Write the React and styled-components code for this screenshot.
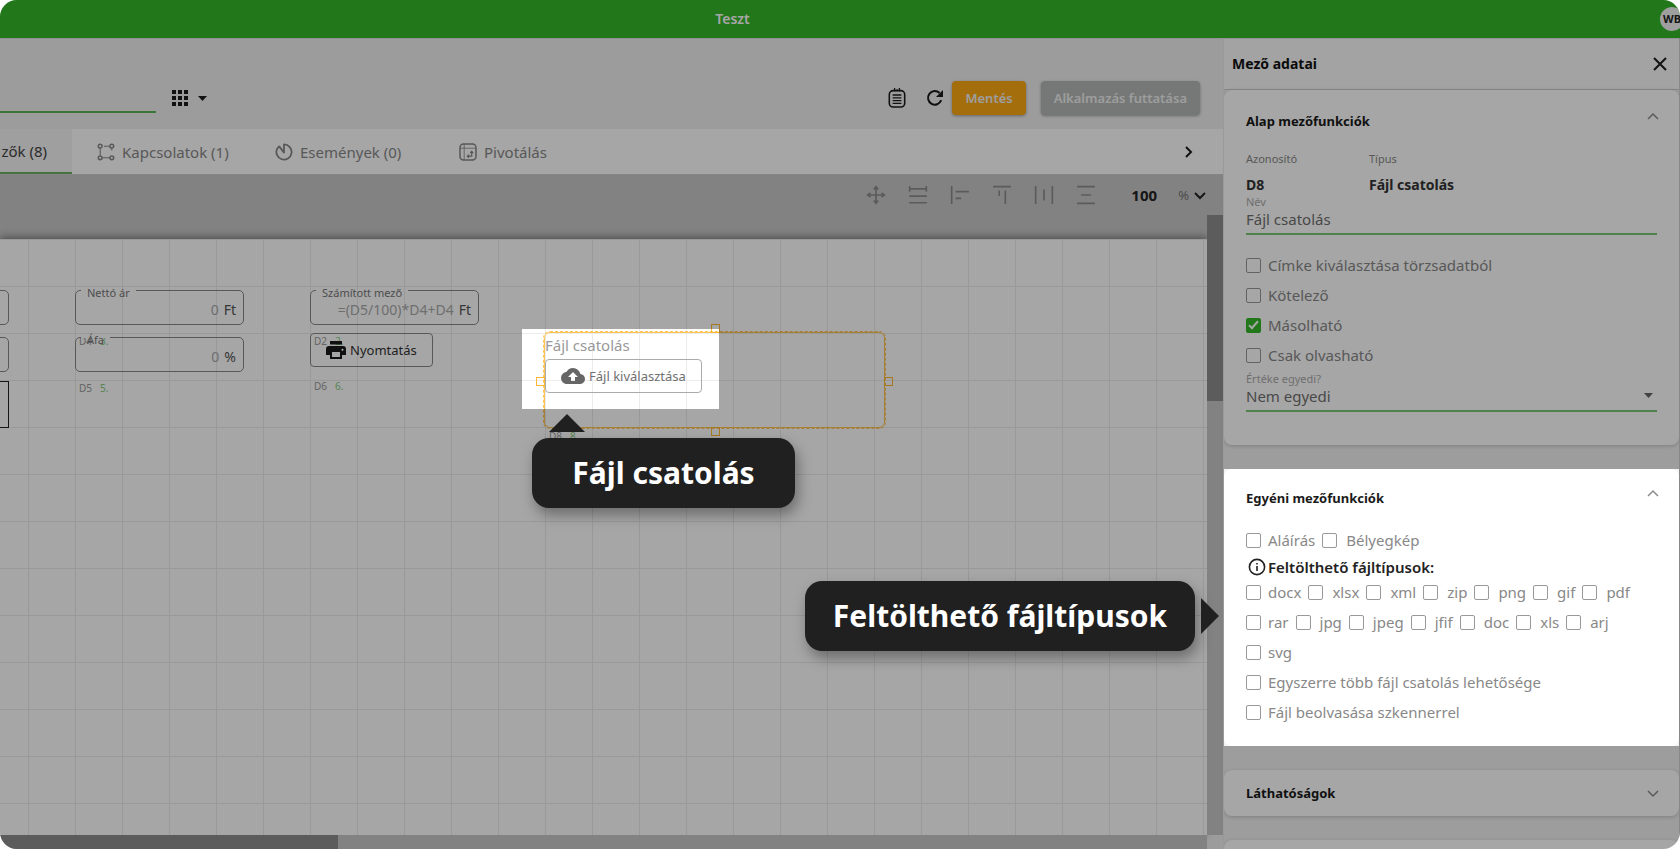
import React from "react";
import styled, { createGlobalStyle, css } from "styled-components";

const DIM = "rgba(0, 0, 0, 0.35)";

const GlobalStyle = createGlobalStyle`
  *, *::before, *::after { box-sizing: border-box; }
  body {
    margin: 0;
    background: #fff;
    color: #222;
    font-family: "Noto Sans", "Open Sans", sans-serif;
    font-size: 15px;
    line-height: 20px;
  }
  button, input, select { font: inherit; color: inherit; }
  button { cursor: pointer; }
  svg { display: block; flex: none; }
`;

const Shell = styled.div`
  height: 100vh;
  display: flex;
  flex-direction: column;
  overflow: hidden;
  border-radius: 17px;
  background: #f0f0f0;
`;

const Header = styled.header`
  position: relative;
  flex: none;
  height: 38px;
  display: flex;
  align-items: center;
  background: #34b728;
  &::after {
    content: "";
    position: absolute;
    inset: 0;
    background: ${DIM};
  }
`;

const AppName = styled.h1`
  flex: 1;
  margin: 0 195px 0 0;
  text-align: center;
  color: #fff;
  font-size: 14px;
  font-weight: 600;
`;

const Avatar = styled.div`
  width: 24px;
  height: 24px;
  margin-right: -4px;
  border-radius: 50%;
  background: #f4f4f4;
  display: flex;
  align-items: center;
  justify-content: center;
  font-size: 11px;
  font-weight: 700;
`;

const Body = styled.div`
  flex: 1;
  min-height: 0;
  display: flex;
`;

/* ---------- editor ---------- */

const Main = styled.main`
  position: relative;
  flex: 1;
  min-width: 0;
  display: flex;
  flex-direction: column;
  overflow: hidden;
`;

const TopBar = styled.div`
  flex: none;
  height: 91px;
  padding: 28px 23px 0 0;
  display: flex;
  align-items: center;
  border-top: 1px solid #e2e2e2;
`;

const NameInput = styled.input`
  width: 156px;
  height: 42px;
  padding: 0;
  border: 0;
  border-bottom: 2px solid #5fb356;
  background: none;
  align-self: flex-start;
  margin: 4px 15px 0 0;
`;

const IconButton = styled.button`
  padding: 0;
  border: 0;
  background: none;
  display: flex;
  align-items: center;
  gap: 9px;
  color: ${(p) => (p.$muted ? "#8c8c8c" : "#1c1c1c")};
`;

const TopActions = styled.div`
  margin-left: auto;
  display: flex;
  align-items: center;
`;

const SmallIcons = styled.div`
  display: flex;
  gap: 20px;
  margin-right: 8px;
`;

const ActionButton = styled.button`
  height: 34px;
  padding: 0 13px;
  border: 0;
  border-radius: 4px;
  background: ${(p) => (p.$primary ? "#fea914" : "#b4b9b7")};
  color: #f2f2f2;
  font-size: 13px;
  font-weight: 600;
  box-shadow: 0 1px 3px rgba(0, 0, 0, 0.35);
  & + & { margin-left: 15px; }
`;

const Tabs = styled.nav`
  flex: none;
  height: 46px;
  display: flex;
  background: #fff;
  border-bottom: 1px solid #ccc;
`;

const Tab = styled.button`
  flex: none;
  width: ${(p) => p.$width};
  padding: 0 25px;
  border: 0;
  background: none;
  display: flex;
  align-items: center;
  gap: 7px;
  white-space: nowrap;
  color: #888;
  ${(p) =>
    p.$active &&
    css`
      padding-left: 0;
      justify-content: flex-end;
      background: #f4f4f4;
      color: #444;
      border-bottom: 2px solid #6bb163;
    `}
`;

const NextTab = styled(IconButton)`
  margin: 0 28px 0 auto;
`;

const AlignBar = styled.div`
  flex: none;
  height: 40px;
  padding-right: 16px;
  display: flex;
  align-items: center;
  justify-content: flex-end;
  gap: 22px;
  background: #c8c8c8;
`;

const ZoomInput = styled.input`
  width: 44px;
  padding: 0;
  border: 0;
  background: none;
  text-align: center;
  font-weight: 700;
  margin-left: 4px;
`;

const ZoomUnit = styled.button`
  padding: 0;
  border: 0;
  background: none;
  display: flex;
  align-items: center;
  gap: 4px;
  font-size: 13px;
  color: #777;
  margin-left: -10px;
  svg { color: #222; }
`;

const Viewport = styled.div`
  flex: 1;
  min-height: 0;
  display: grid;
  grid-template-columns: 1fr 16px;
  grid-template-rows: 1fr 14px;
  background: #c8c8c8;
`;

const PageArea = styled.div`
  min-width: 0;
  padding-top: 24px;
  display: flex;
`;

const Page = styled.div`
  position: relative;
  flex: 1;
  background-color: #fff;
  background-image: linear-gradient(to right, #ececec 1px, transparent 1px),
    linear-gradient(to bottom, #ececec 1px, transparent 1px);
  background-size: 47px 47px;
  background-position: 28px 0;
  box-shadow: 0 -2px 8px rgba(0, 0, 0, 0.4);
`;

const VTrack = styled.div`
  position: relative;
  z-index: 1;
  background: #c8c8c8;
`;

const VThumb = styled.div`
  height: 30%;
  background: #8e8e8e;
`;

const HTrack = styled.div`
  position: relative;
  z-index: 1;
  background: #c8c8c8;
`;

const HThumb = styled.div`
  width: 28%;
  height: 100%;
  background: #8e8e8e;
`;

const Corner = styled.div`
  background: #f0f0f0;
`;

/* items on the free form canvas */

const Placed = styled.div`
  position: absolute;
  left: ${(p) => p.$x}px;
  top: ${(p) => p.$y}px;
`;

const FieldBox = styled.div`
  position: relative;
  width: 169px;
  height: 35px;
  padding: 5px 7px 0 0;
  border: 1px solid ${(p) => (p.$dark ? "#222" : "#888")};
  border-radius: ${(p) => (p.$dark ? 0 : 5)}px;
  display: flex;
  align-items: center;
  gap: 5px;
  font-size: 14px;
  ${(p) => p.$dark && "height: 47px;"}
`;

const FieldLabel = styled.label`
  position: absolute;
  left: 5px;
  top: -5px;
  padding: 0 6px;
  background: linear-gradient(#fff, #fff) 0 4px / 100% 1px no-repeat;
  font-size: 11px;
  line-height: 14px;
  color: #777;
  white-space: nowrap;
`;

const FieldInput = styled.input`
  flex: 1;
  min-width: 0;
  padding: 0;
  border: 0;
  background: none;
  text-align: right;
  color: #aaa;
`;

const FieldUnit = styled.span`
  color: #555;
`;

const FieldTag = styled.span`
  display: flex;
  gap: 8px;
  font-size: 10px;
  line-height: 14px;
  color: #999;
  b { font-weight: 400; color: #86cc7f; }
`;

const OutlineButton = styled.button`
  height: 34px;
  padding: 0 15px;
  border: 1px solid ${(p) => (p.$soft ? "#aaa" : "#888")};
  border-radius: 4px;
  background: none;
  display: flex;
  align-items: center;
  gap: 4px;
  font-size: 13px;
  white-space: nowrap;
  color: ${(p) => (p.$soft ? "#707070" : "#333")};
`;

const Selection = styled.div`
  position: relative;
  width: 341px;
  height: 96px;
  border: 1px solid #ffc456;
  border-radius: 6px;
  outline: 1px dashed #ffc456;
  color: #999;
`;

const handleSides = {
  top: "left: 166px; top: -9px;",
  bottom: "left: 166px; bottom: -9px;",
  left: "left: -9px; top: 44px;",
  right: "right: -9px; top: 44px;",
};

const Handle = styled.i`
  position: absolute;
  width: 9px;
  height: 9px;
  border: 1px solid #ffb833;
  ${(p) => handleSides[p.$side]}
`;

const UploadLabel = styled.div`
  margin: 2px 0 4px;
`;

const Spotlight = styled.div`
  position: absolute;
  z-index: 2;
  left: 522px;
  top: 90px;
  width: 197px;
  height: 80px;
  box-shadow: 0 0 0 9999px ${DIM};
  pointer-events: none;
`;

const Callout = styled.div`
  position: absolute;
  z-index: 3;
  height: 70px;
  border-radius: 17px;
  background: #202020;
  color: #fff;
  display: flex;
  align-items: center;
  justify-content: center;
  font-size: 30px;
  font-weight: 700;
  white-space: nowrap;
  box-shadow: 3px 7px 14px rgba(0, 0, 0, 0.35);
`;

const AttachCallout = styled(Callout)`
  left: 532px;
  top: 400px;
  width: 263px;
  &::before {
    content: "";
    position: absolute;
    left: 17px;
    top: -24px;
    border: 18px solid transparent;
    border-top-width: 0;
    border-bottom-color: #202020;
  }
`;

const TypesCallout = styled(Callout)`
  right: 28px;
  top: 543px;
  width: 390px;
  &::before {
    content: "";
    position: absolute;
    right: -24px;
    top: 17px;
    border: 18px solid transparent;
    border-right-width: 0;
    border-left-color: #202020;
  }
`;

/* ---------- side panel ---------- */

const Panel = styled.aside`
  flex: none;
  width: 457px;
  overflow: hidden;
  border-left: 1px solid #999;
  border-right: 1px solid #888;
  background: #f2f2f2;
`;

const PanelHeader = styled.div`
  height: 52px;
  padding: 0 12px 0 8px;
  display: flex;
  align-items: center;
  justify-content: space-between;
  background: #fafafa;
  border-top: 1px solid #e2e2e2;
  border-bottom: 1px solid #d0d0d0;
`;

const PanelTitle = styled.h2`
  margin: 0;
  font-size: 14px;
  font-weight: 700;
  color: #111;
`;

const Card = styled.section`
  margin-bottom: 24px;
  padding: 0 22px;
  border-radius: 8px;
  background: #fff;
  box-shadow: 0 1px 4px rgba(0, 0, 0, 0.2);
`;

const BasicCard = styled(Card)`
  padding-bottom: 33px;
`;

/* the one lit section: everything round it in the panel is dimmed */
const LitArea = styled.div`
  position: relative;
  z-index: 1;
  margin-bottom: 24px;
  background: #f4f4f4;
  box-shadow: 0 0 0 9999px ${DIM};
`;

const LitCard = styled(Card)`
  margin: 0;
  padding-bottom: 19px;
  box-shadow: none;
`;

const headSizes = {
  open: "height: 58px; padding-top: 4px;",
  lit: "height: 56px; padding-top: 2px;",
  closed: "height: 46px;",
};

const CardHead = styled.div`
  ${(p) => headSizes[p.$kind]}
  display: flex;
  align-items: center;
  justify-content: space-between;
`;

const CardTitle = styled.h3`
  margin: 0;
  font-size: 13px;
  font-weight: 700;
  color: #1a1a1a;
`;

const Toggle = styled(IconButton)`
  color: #8c8c8c;
  margin: 0 -3px ${(p) => (p.$closed ? 0 : 10)}px 0;
`;

const Facts = styled.dl`
  margin: 1px 0 0;
  display: grid;
  grid-template-columns: 123px 1fr;
  row-gap: 6px;
  dt { font-size: 11px; color: #888; }
  dd { margin: 0; font-size: 14px; font-weight: 700; color: #333; grid-row: 2; }
`;

const TextField = styled.div`
  position: relative;
  display: flex;
  flex-direction: column;
  border-bottom: 2px solid #7cc774;
  label { font-size: 11px; line-height: 14px; color: #aaa; }
  input, select {
    width: 100%;
    height: 24px;
    padding: 0 0 4px;
    border: 0;
    background: none;
    appearance: none;
    color: #707070;
  }
  svg { position: absolute; right: 4px; bottom: 12px; }
`;

const Stack = styled.div`
  padding: 15px 0 2px;
`;

const CheckRow = styled.div`
  display: flex;
  gap: 7px;
  height: 30px;
  align-items: center;
`;

const CheckLabel = styled.label`
  display: flex;
  align-items: center;
  gap: 7px;
  color: #888;
  white-space: nowrap;
  & + & { gap: 9px; }
`;

const CheckInput = styled.input`
  appearance: none;
  position: relative;
  flex: none;
  width: 15px;
  height: 15px;
  margin: 1px 0 0;
  border: 1px solid #999;
  border-radius: 2px;
  background: #fff;
  &:checked { background: #34b728; border-color: #34b728; }
  &:checked::after {
    content: "";
    position: absolute;
    left: 4px;
    top: 0;
    width: 5px;
    height: 10px;
    border: solid #fff;
    border-width: 0 2px 2px 0;
    transform: rotate(42deg);
  }
`;

const TypesHeading = styled.h4`
  margin: 0;
  padding: 2px 0 0 2px;
  height: 22px;
  display: flex;
  align-items: center;
  gap: 2px;
  font-size: 15px;
  font-weight: 600;
  color: #222;
`;

/* ---------- icons ---------- */

const Svg = ({ size = 18, children, w = 1.5, ...rest }) => (
  <svg width={size} height={size} viewBox="0 0 18 18" fill="none" stroke="currentColor" strokeWidth={w} aria-hidden="true" {...rest}>
    {children}
  </svg>
);

const GridIcon = () => (
  <Svg stroke="none" fill="currentColor">
    {[1, 7, 13].map((y) => [0, 6, 12].map((x) => <rect key={`${x}-${y}`} x={x + 1} y={y} width="4" height="4" />))}
  </Svg>
);
const Caret = ({ color = "currentColor" }) => (
  <svg width="9" height="5" viewBox="0 0 9 5" aria-hidden="true"><path d="M0 0h9L4.5 5z" fill={color} /></svg>
);
const ClipboardIcon = () => (
  <svg width="18" height="20" viewBox="0 0 18 20" fill="none" stroke="currentColor" strokeWidth="1.6" aria-hidden="true">
    <rect x="1.3" y="2.6" width="15.4" height="16.4" rx="3.8" />
    <path d="M6.6 0v3.500M9 1.200v2M11.400 0v3.500M4.600 7h8.800M4.600 9.800h8.800M4.600 12.600h8.800M4.600 15.400h8.800" strokeWidth="1.300" />
  </svg>
);
const RefreshIcon = () => (
  <Svg w={2}>
    <path d="M15.2 11.2A6.8 6.8 0 1 1 13.6 4" />
    <path d="M17 1v7h-7z" fill="currentColor" stroke="none" />
  </Svg>
);
const RelationsIcon = () => (
  <Svg>
    <circle cx="3.2" cy="3.200" r="1.900" /><circle cx="14.8" cy="3.200" r="1.900" />
    <circle cx="3.2" cy="14.800" r="1.900" /><circle cx="14.8" cy="14.800" r="1.900" />
    <path d="M7 3.200h5.500M5.500 14.800h7M3.200 5.500v7M14.800 5.500v2" strokeWidth="1.100" />
  </Svg>
);
const EventsIcon = () => (
  <Svg w={1.8} strokeLinejoin="round">
    <path d="M9 9.600V1.400A7.600 7.600 0 1 1 2.200 5.600L4.200 3.400z" />
  </Svg>
);
const PivotIcon = () => (
  <Svg>
    <rect x="1" y="1" width="16" height="16" rx="3.5" />
    <path d="M1 5.2h16M5.2 1v16" strokeWidth="0.800" />
    <path d="M8.5 13.2h4.2V8.6M10 11.6l-1.7 1.6 1.7 1.6M11.2 10l1.5-1.6 1.5 1.6" strokeWidth="1.2" />
  </Svg>
);
const Chevron = ({ d, size = 14, w = 2 }) => (
  <svg width={size} height={size} viewBox="0 0 14 14" fill="none" stroke="currentColor" strokeWidth={w} aria-hidden="true"><path d={d} /></svg>
);
const UP = "M2 10l5-5 5 5";
const DOWN = "M2 5l5 5 5-5";
const RIGHT = "M5 2l5 5-5 5";

const alignIcons = [
  ["Mozgatás", "M9 1.500v15M1.500 9h15M7 4 9 1.500l2 2.500M7 14l2 2.500 2-2.500M4 7 1.500 9 4 11M14 7l2.500 2-2.500 2"],
  ["Azonos szélesség", "M1.500 1v5M16.500 1v5M1.500 3.500h15M1 10h16M1 16h16"],
  ["Balra igazítás", "M1.500 1v16M5 6h12M5 12h5"],
  ["Felülre igazítás", "M1 1.500h16M6.500 5v5M12 5v12"],
  ["Vízszintes elosztás", "M1.500 1v16M16.500 1v16M9 4v10"],
  ["Függőleges elosztás", "M1 1.500h16M1 16.500h16M4.5 9h9"],
];

const PrintIcon = () => (
  <svg width="20" height="18" viewBox="0 0 20 18" fill="#1a1a1a" aria-hidden="true">
    <path d="M4 0h12v3.6H4zM3 5h14a3 3 0 0 1 3 3v6h-4v4H4v-4H0V8a3 3 0 0 1 3-3zm3 6v5h8v-5zm10.500-3.200a1 1 0 1 0 .01 0z" fillRule="evenodd" />
  </svg>
);
const CloudIcon = () => (
  <svg width="24" height="16" viewBox="0 0 24 16" fill="#666" aria-hidden="true">
    <path d="M19.350 6.040A7.490 7.490 0 0 0 12 0C9.110 0 6.600 1.640 5.350 4.040A5.994 5.994 0 0 0 0 10c0 3.310 2.690 6 6 6h13c2.760 0 5-2.240 5-5 0-2.640-2.050-4.780-4.650-4.960zM14 9v4h-4V9H7l5-5 5 5h-3z" />
  </svg>
);

/* ---------- parts ---------- */

const Check = ({ label, checked = false }) => (
  <CheckLabel>
    <CheckInput type="checkbox" defaultChecked={checked} />
    {label}
  </CheckLabel>
);

const Tag = ({ x, y, id, n }) => (
  <Placed $x={x} $y={y}><FieldTag>{id}<b>{n}.</b></FieldTag></Placed>
);

const CanvasField = ({ x, y, id, label, value, unit }) => (
  <Placed $x={x} $y={y}>
    <FieldBox>
      {label && <FieldLabel htmlFor={id}>{label}</FieldLabel>}
      <FieldInput id={id} defaultValue={value} aria-label={label ? undefined : "Mező"} />
      {unit && <FieldUnit>{unit}</FieldUnit>}
    </FieldBox>
  </Placed>
);

const fileTypes = [
  ["docx", "xlsx", "xml", "zip", "png", "gif", "pdf"],
  ["rar", "jpg", "jpeg", "jfif", "doc", "xls", "arj"],
  ["svg"],
];

export default function App() {
  return (
    <>
      <GlobalStyle />
      <Shell>
        <Header>
          <AppName>Teszt</AppName>
          <Avatar>WB</Avatar>
        </Header>
        <Body>
          <Main>
            <TopBar>
              <NameInput aria-label="Név" />
              <IconButton aria-label="Nézet"><GridIcon /><Caret /></IconButton>
              <TopActions>
                <SmallIcons>
                  <IconButton aria-label="Napló"><ClipboardIcon /></IconButton>
                  <IconButton aria-label="Frissítés"><RefreshIcon /></IconButton>
                </SmallIcons>
                <ActionButton $primary>Mentés</ActionButton>
                <ActionButton>Alkalmazás futtatása</ActionButton>
              </TopActions>
            </TopBar>
            <Tabs>
              <Tab $active $width="72px">zők (8)</Tab>
              <Tab $width="178px"><RelationsIcon />Kapcsolatok (1)</Tab>
              <Tab $width="184px"><EventsIcon />Események (0)</Tab>
              <Tab $width="140px"><PivotIcon />Pivotálás</Tab>
              <NextTab aria-label="Következő"><Chevron d={RIGHT} /></NextTab>
            </Tabs>
            <AlignBar>
              {alignIcons.map(([name, d]) => (
                <IconButton key={name} $muted aria-label={name}>
                  <Svg size={20}><path d={d} /></Svg>
                </IconButton>
              ))}
              <ZoomInput defaultValue="100" aria-label="Nagyítás" />
              <ZoomUnit>%<Chevron d={DOWN} /></ZoomUnit>
            </AlignBar>
            <Viewport>
              <PageArea>
                <Page>
                  <CanvasField x={-160} y={51} id="f1" />
                  <CanvasField x={-160} y={98} id="f2" />
                  <Placed $x={-160} $y={142}><FieldBox $dark /></Placed>
                  <Tag x={79} y={95} id="D4" n={3} />
                  <CanvasField x={75} y={51} id="d4" label="Nettó ár" value="0" unit="Ft" />
                  <CanvasField x={75} y={98} id="d5" label="Áfa" value="0" unit="%" />
                  <Tag x={79} y={142} id="D5" n={5} />
                  <CanvasField x={310} y={51} id="d2" label="Számított mező" value="=(D5/100)*D4+D4" unit="Ft" />
                  <Tag x={314} y={95} id="D2" n={2} />
                  <Placed $x={310} $y={94}>
                    <OutlineButton><PrintIcon />Nyomtatás</OutlineButton>
                  </Placed>
                  <Tag x={314} y={140} id="D6" n={6} />
                  <Placed $x={544} $y={93}>
                    <Selection>
                      <UploadLabel>Fájl csatolás</UploadLabel>
                      <OutlineButton $soft><CloudIcon />Fájl kiválasztása</OutlineButton>
                      {Object.keys(handleSides).map((s) => <Handle key={s} $side={s} />)}
                    </Selection>
                  </Placed>
                  <Tag x={549} y={190} id="D8" n={8} />
                  <Spotlight />
                </Page>
              </PageArea>
              <VTrack><VThumb /></VTrack>
              <HTrack><HThumb /></HTrack>
              <Corner />
            </Viewport>
            <AttachCallout>Fájl csatolás</AttachCallout>
            <TypesCallout>Feltölthető fájltípusok</TypesCallout>
          </Main>
          <Panel>
            <PanelHeader>
              <PanelTitle>Mező adatai</PanelTitle>
              <IconButton aria-label="Bezárás"><Chevron d="M1 1l12 12M13 1L1 13" w={2} /></IconButton>
            </PanelHeader>
            <BasicCard>
              <CardHead $kind="open">
                <CardTitle>Alap mezőfunkciók</CardTitle>
                <Toggle aria-label="Összecsukás"><Chevron d={UP} w={1.5} /></Toggle>
              </CardHead>
              <Facts>
                <dt>Azonosító</dt>
                <dd>D8</dd>
                <dt>Típus</dt>
                <dd>Fájl csatolás</dd>
              </Facts>
              <TextField>
                <label htmlFor="name">Név</label>
                <input id="name" defaultValue="Fájl csatolás" />
              </TextField>
              <Stack>
                <CheckRow><Check label="Címke kiválasztása törzsadatból" /></CheckRow>
                <CheckRow><Check label="Kötelező" /></CheckRow>
                <CheckRow><Check label="Másolható" checked /></CheckRow>
                <CheckRow><Check label="Csak olvasható" /></CheckRow>
              </Stack>
              <TextField>
                <label htmlFor="unique">Értéke egyedi?</label>
                <select id="unique"><option>Nem egyedi</option></select>
                <Caret color="#666" />
              </TextField>
            </BasicCard>
            <LitArea>
              <LitCard>
                <CardHead $kind="lit">
                  <CardTitle>Egyéni mezőfunkciók</CardTitle>
                  <Toggle aria-label="Összecsukás"><Chevron d={UP} w={1.5} /></Toggle>
                </CardHead>
                <CheckRow><Check label="Aláírás" /><Check label="Bélyegkép" /></CheckRow>
                <TypesHeading>
                  <Svg w={1.6}><circle cx="9" cy="9" r="7.600" /><path d="M9 8v5M9 5v1.600" /></Svg>
                  Feltölthető fájltípusok:
                </TypesHeading>
                {fileTypes.map((row) => (
                  <CheckRow key={row[0]}>{row.map((t) => <Check key={t} label={t} />)}</CheckRow>
                ))}
                <CheckRow><Check label="Egyszerre több fájl csatolás lehetősége" /></CheckRow>
                <CheckRow><Check label="Fájl beolvasása szkennerrel" /></CheckRow>
              </LitCard>
            </LitArea>
            <Card>
              <CardHead $kind="closed">
                <CardTitle>Láthatóságok</CardTitle>
                <Toggle $closed aria-label="Kinyitás"><Chevron d={DOWN} w={1.5} /></Toggle>
              </CardHead>
            </Card>
            <Card><CardHead $kind="closed" /></Card>
          </Panel>
        </Body>
      </Shell>
    </>
  );
}
